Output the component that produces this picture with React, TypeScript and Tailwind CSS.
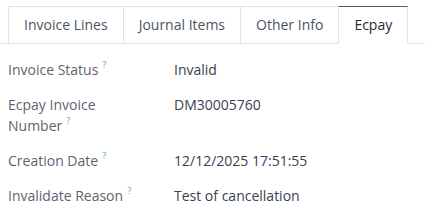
import React from "react";

const tabs = ["Invoice Lines", "Journal Items", "Other Info", "Ecpay"];

const rows: { label: React.ReactNode; value: string }[] = [
  { label: "Invoice Status", value: "Invalid" },
  { label: <>Ecpay Invoice<br />Number</>, value: "DM30005760" },
  { label: "Creation Date", value: "12/12/2025 17:51:55" },
  { label: "Invalidate Reason", value: "Test of cancellation" },
];

export default function App() {
  return (
    <div
      className="w-[425px] h-[223px] bg-white overflow-hidden text-[14px]"
      style={{ fontFamily: '"Open Sans", "Noto Sans", sans-serif' }}
    >
      <div className="pt-[6px] border-b border-[#dee2e6] flex pl-2">
        {tabs.map((t, i) => {
          const active = i === tabs.length - 1;
          return (
            <div
              key={t}
              className={
                active
                  ? "-ml-px -mb-px h-[38px] pb-px px-[15px] flex items-center border border-[#dee2e6] border-t-[#714b67] border-b-white bg-white text-[#1f2937]"
                  : i === 0
                  ? "-mb-px h-[38px] pb-px px-[15px] flex items-center border border-[#dee2e6] border-b-transparent text-[#4b5563]"
                  : "-ml-px -mb-px h-[38px] pb-px px-[15px] flex items-center border border-[#dee2e6] border-b-transparent text-[#4b5563]"
              }
            >
              {t}
            </div>
          );
        })}
      </div>
      <div className="pl-2 pt-[15px] flex flex-col gap-[14px]">
        {rows.map((r, i) => (
          <div key={i} className="flex leading-[21px]">
            <div className="w-[166px] text-[#5f636f]">
              {r.label}
              <span className="inline-block ml-[4px] text-[#4fa8d2] text-[9px] leading-none align-[7px]">?</span>
            </div>
            <div className="text-[#374151]">{r.value}</div>
          </div>
        ))}
      </div>
    </div>
  );
}
